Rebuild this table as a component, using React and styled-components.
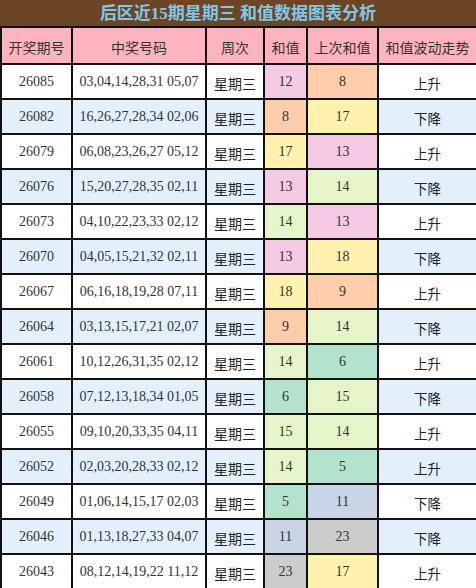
import React from "react";
import styled, { createGlobalStyle } from "styled-components";

const GlobalStyle = createGlobalStyle`
  html, body {
    margin: 0;
    padding: 0;
    background: #ffffff;
  }
`;

const Wrapper = styled.div`
  width: 476px;
  font-family: "Liberation Serif", "Noto Sans CJK SC", serif;
  color: #333;
`;

const Title = styled.div`
  height: 26px;
  background: #6b4525;
  color: #82c8e6;
  font-size: 17px;
  font-weight: 700;
  line-height: 27px;
  text-align: center;
`;

const Table = styled.table`
  width: 476px;
  border-collapse: collapse;
  table-layout: fixed;
  border: 2px solid #111;
`;

const HeadCell = styled.th`
  height: 33px;
  background: #ffb3bf;
  border: 2px solid #111;
  font-weight: 400;
  font-size: 14px;
  padding: 2px 0 0;
  text-align: center;
  color: #333;
`;

const Row = styled.tr`
  height: 35px;
  background: ${(p) => (p.$alt ? "#e3f0fb" : "#ffffff")};
`;

const Cell = styled.td`
  border: 2px solid #111;
  padding: 0;
  text-align: center;
  font-size: 14px;
  background: ${(p) => p.$bg || "transparent"};
  color: #333;
`;

const Week = styled(Cell)`
  color: #222;
  padding-top: 3px;
`;

const Trend = styled(Cell)`
  color: #222;
  font-size: 13.5px;
  padding-top: 3px;
`;

const palette = {
  pink: "#f4cae4",
  peach: "#fdcdac",
  yellow: "#fff2ae",
  green: "#e6f5c9",
  mint: "#b3e2cd",
  blue: "#cbd5e8",
  grey: "#cccccc",
};

const colorOf = (v) => {
  if (v === 5 || v === 6) return palette.mint;
  if (v === 8 || v === 9) return palette.peach;
  if (v === 11) return palette.blue;
  if (v === 12 || v === 13) return palette.pink;
  if (v === 14 || v === 15) return palette.green;
  if (v === 17 || v === 18) return palette.yellow;
  return palette.grey;
};

const rows = [
  ["26085", "03,04,14,28,31 05,07", 12, 8, "上升"],
  ["26082", "16,26,27,28,34 02,06", 8, 17, "下降"],
  ["26079", "06,08,23,26,27 05,12", 17, 13, "上升"],
  ["26076", "15,20,27,28,35 02,11", 13, 14, "下降"],
  ["26073", "04,10,22,23,33 02,12", 14, 13, "上升"],
  ["26070", "04,05,15,21,32 02,11", 13, 18, "下降"],
  ["26067", "06,16,18,19,28 07,11", 18, 9, "上升"],
  ["26064", "03,13,15,17,21 02,07", 9, 14, "下降"],
  ["26061", "10,12,26,31,35 02,12", 14, 6, "上升"],
  ["26058", "07,12,13,18,34 01,05", 6, 15, "下降"],
  ["26055", "09,10,20,33,35 04,11", 15, 14, "上升"],
  ["26052", "02,03,20,28,33 02,12", 14, 5, "上升"],
  ["26049", "01,06,14,15,17 02,03", 5, 11, "下降"],
  ["26046", "01,13,18,27,33 04,07", 11, 23, "下降"],
  ["26043", "08,12,14,19,22 11,12", 23, 17, "上升"],
];

const App = () => {
  return (
    <Wrapper>
      <GlobalStyle />
      <Title>后区近15期星期三 和值数据图表分析</Title>
      <Table>
        <colgroup>
          <col style={{ width: 71 }} />
          <col style={{ width: 134 }} />
          <col style={{ width: 58 }} />
          <col style={{ width: 43 }} />
          <col style={{ width: 71 }} />
          <col style={{ width: 99 }} />
        </colgroup>
        <thead>
          <tr>
            <HeadCell>开奖期号</HeadCell>
            <HeadCell>中奖号码</HeadCell>
            <HeadCell>周次</HeadCell>
            <HeadCell>和值</HeadCell>
            <HeadCell>上次和值</HeadCell>
            <HeadCell>和值波动走势</HeadCell>
          </tr>
        </thead>
        <tbody>
          {rows.map((r, i) => (
            <Row key={r[0]} $alt={i % 2 === 1}>
              <Cell>{r[0]}</Cell>
              <Cell>{r[1]}</Cell>
              <Week>星期三</Week>
              <Cell $bg={colorOf(r[2])}>{r[2]}</Cell>
              <Cell $bg={colorOf(r[3])}>{r[3]}</Cell>
              <Trend>{r[4]}</Trend>
            </Row>
          ))}
        </tbody>
      </Table>
    </Wrapper>
  );
};

export default App;
